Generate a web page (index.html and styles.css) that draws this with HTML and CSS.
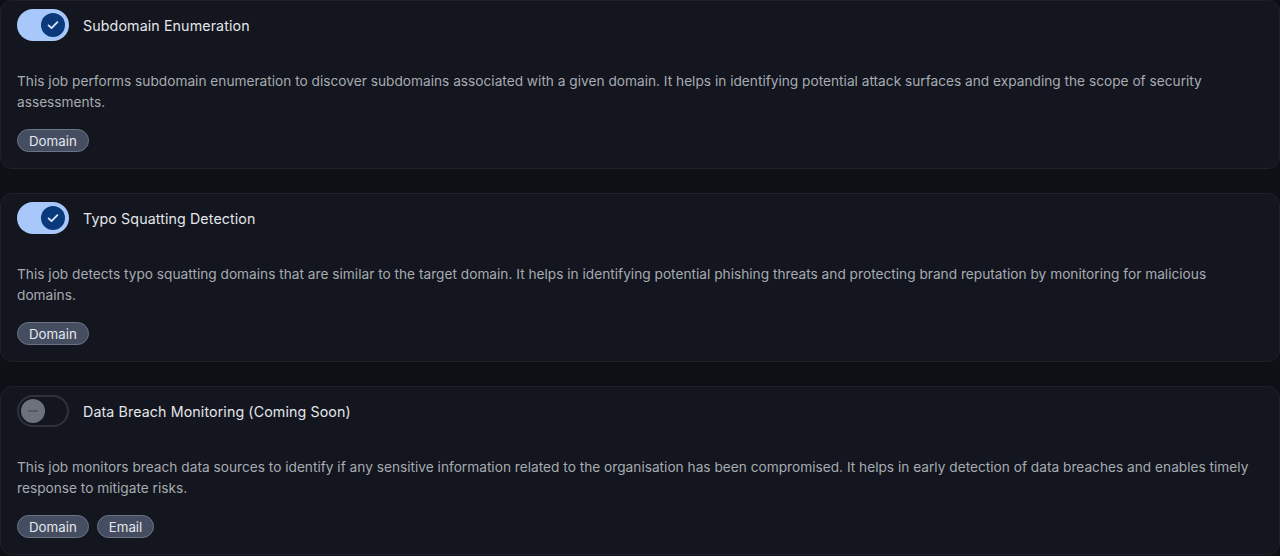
FILE: index.html
```html
<!DOCTYPE html>
<html>
<head>
	<meta charset="UTF-8">
	<title>Jobs</title>
	<link rel="stylesheet" href="styles.css">
</head>
<body>
	<div class="job-list">
		<div class="job-card">
			<div class="job-head">
				<span class="switch is-on"><span class="thumb"><svg viewBox="0 0 16 16" width="16" height="16"><path d="M3.6 8.4l2.9 2.8 5.9-6" fill="none" stroke="#dce7ff" stroke-width="1.8" stroke-linecap="round" stroke-linejoin="round"/></svg></span></span>
				<span class="job-title">Subdomain Enumeration</span>
			</div>
			<p class="job-desc">This job performs subdomain enumeration to discover subdomains associated with a given domain. It helps in identifying potential attack surfaces and expanding the scope of security assessments.</p>
			<div class="tags"><span class="tag">Domain</span></div>
		</div>
		<div class="job-card">
			<div class="job-head">
				<span class="switch is-on"><span class="thumb"><svg viewBox="0 0 16 16" width="16" height="16"><path d="M3.6 8.4l2.9 2.8 5.9-6" fill="none" stroke="#dce7ff" stroke-width="1.8" stroke-linecap="round" stroke-linejoin="round"/></svg></span></span>
				<span class="job-title">Typo Squatting Detection</span>
			</div>
			<p class="job-desc">This job detects typo squatting domains that are similar to the target domain. It helps in identifying potential phishing threats and protecting brand reputation by monitoring for malicious domains.</p>
			<div class="tags"><span class="tag">Domain</span></div>
		</div>
		<div class="job-card">
			<div class="job-head">
				<span class="switch is-off"><span class="thumb"><svg viewBox="0 0 16 16" width="16" height="16"><path d="M3.5 8h9" fill="none" stroke="#4d515b" stroke-width="1.4" stroke-linecap="round"/></svg></span></span>
				<span class="job-title">Data Breach Monitoring (Coming Soon)</span>
			</div>
			<p class="job-desc">This job monitors breach data sources to identify if any sensitive information related to the organisation has been compromised. It helps in early detection of data breaches and enables timely response to mitigate risks.</p>
			<div class="tags"><span class="tag">Domain</span><span class="tag">Email</span></div>
		</div>
	</div>
</body>
</html>
```

FILE: styles.css
```css
html, body {margin:0; padding:0; background:#0e1015;}
body {font-family:Inter, "Noto Sans", sans-serif; -webkit-font-smoothing:antialiased;}
.job-list {display:flex; flex-direction:column; gap:24px;}
.job-card {height:169px; box-sizing:border-box; padding:8px 16px 16px; background:#13161e; border:1px solid #1e212a; border-radius:12px;}
	.job-head {display:flex; align-items:center; gap:14px; height:32px;}
	.job-title {font-size:14.25px; color:#e3e5ea; letter-spacing:.1px;}
	.job-desc {margin:30px 0 16px; font-size:13.7px; line-height:21px; color:#a7abb2;}
	.tags {display:flex; gap:8px;}
	.tag {display:inline-flex; align-items:center; height:23px; box-sizing:border-box; padding:0 11px; font-size:13.3px; color:#e4e7ee; background:#454d60; border:1px solid #6c7487; border-radius:12px;}

.switch {display:flex; align-items:center; width:52px; height:32px; box-sizing:border-box; border-radius:16px; flex:none;}
	.switch .thumb {display:flex; align-items:center; justify-content:center; width:24px; height:24px; border-radius:50%;}
.switch.is-on {justify-content:flex-end; padding-right:4px; background:#a8c7fa;}
	.switch.is-on .thumb {background:#0b3a7c;}
.switch.is-off {padding-left:2px; border:2px solid #2f323b; background:transparent;}
	.switch.is-off .thumb {background:#6d717b;}
```
